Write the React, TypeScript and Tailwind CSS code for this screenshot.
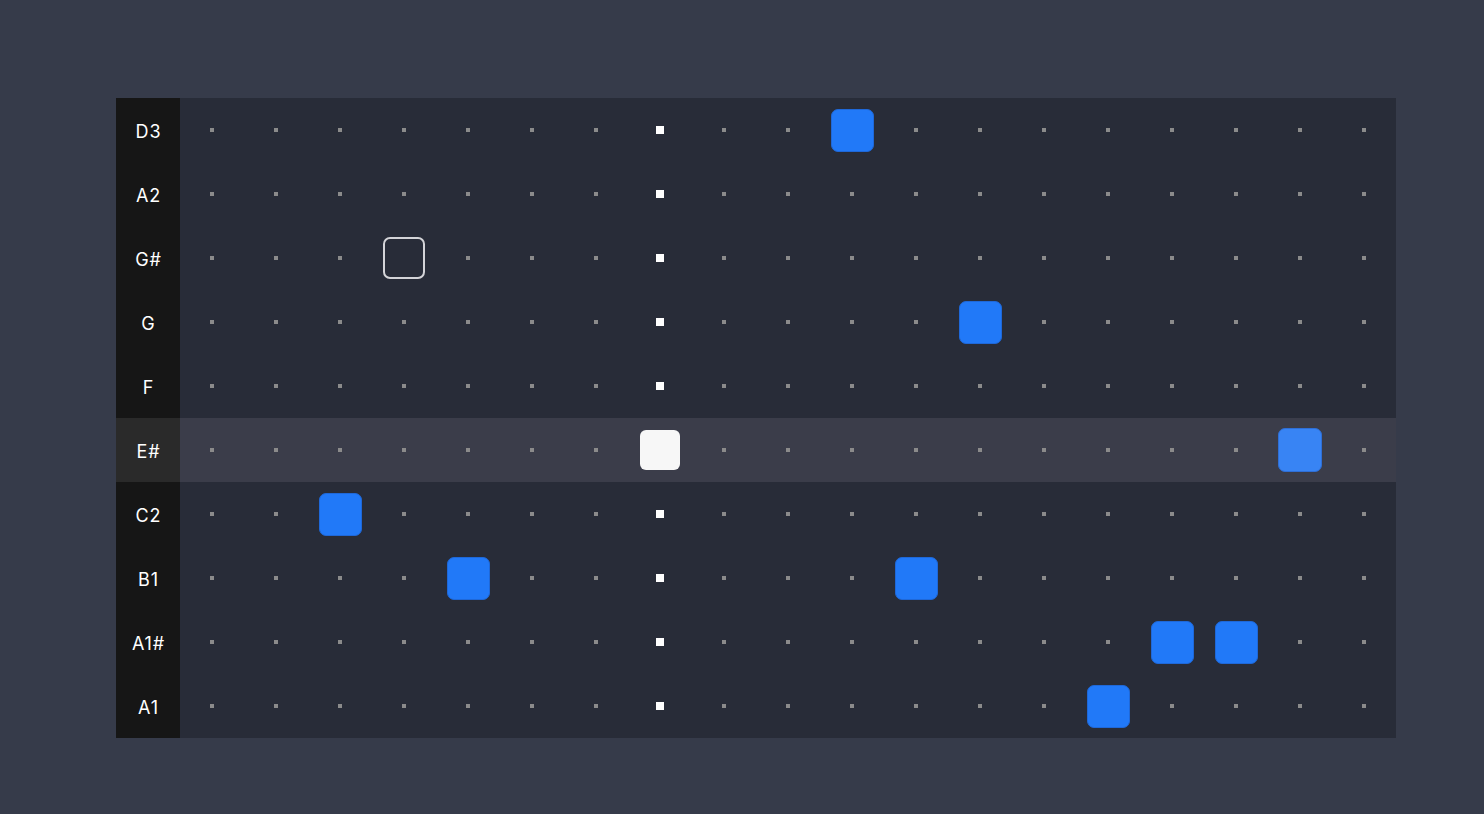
import React from "react";

const ROWS = ["D3", "A2", "G#", "G", "F", "E#", "C2", "B1", "A1#", "A1"];
const COLS = 19;
const PLAYHEAD = 7;
const ACTIVE_ROW = 5;

// row -> active step indexes
const NOTES: Record<number, number[]> = {
  0: [10],
  3: [12],
  5: [17],
  6: [2],
  7: [4, 11],
  8: [15, 16],
  9: [14],
};

function Cell({ row, col }: { row: number; col: number }) {
  const on = NOTES[row]?.includes(col);
  const isHead = col === PLAYHEAD;

  if (row === 2 && col === 3) {
    return <div className="size-[42px] rounded-[7px] border-2 border-[#d4d4d8]" />;
  }
  if (row === ACTIVE_ROW && isHead) {
    return <div className="size-10 rounded-[6px] bg-[#f7f7f7]" />;
  }
  if (on && row === ACTIVE_ROW) {
    return <div className="size-11 rounded-[7px] border border-[#2f6fd6] bg-[#3884f4]" />;
  }
  if (on) {
    return <div className="size-[43px] rounded-[7px] border border-[#1f68d8] bg-[#2179f8]" />;
  }
  if (isHead) return <div className="size-2 bg-white" />;
  return <div className="size-1 bg-[#8b8b8b]" />;
}

export default function App() {
  return (
    <main
      className="flex h-[814px] w-full items-start justify-start bg-[#363b4a] pl-[116px] pt-[98px]"
      style={{ fontFamily: "Inter, 'Noto Sans', sans-serif" }}
    >
      <div className="flex flex-col bg-[#282c38]">
        {ROWS.map((label, r) => (
          <div key={label} className={`flex h-16 ${r === ACTIVE_ROW ? "bg-[#3b3d4a]" : ""}`}>
            <div
              className={`flex w-16 items-center justify-center pl-[1px] pt-[2px] text-[18px] tracking-[0.05em] text-white ${
                r === ACTIVE_ROW ? "bg-[#2a2a2a]" : "bg-[#161616]"
              }`}
            >
              {label}
            </div>
            {Array.from({ length: COLS }).map((_, c) => (
              <div key={c} className="flex size-16 items-center justify-center">
                <Cell row={r} col={c} />
              </div>
            ))}
          </div>
        ))}
      </div>
    </main>
  );
}
